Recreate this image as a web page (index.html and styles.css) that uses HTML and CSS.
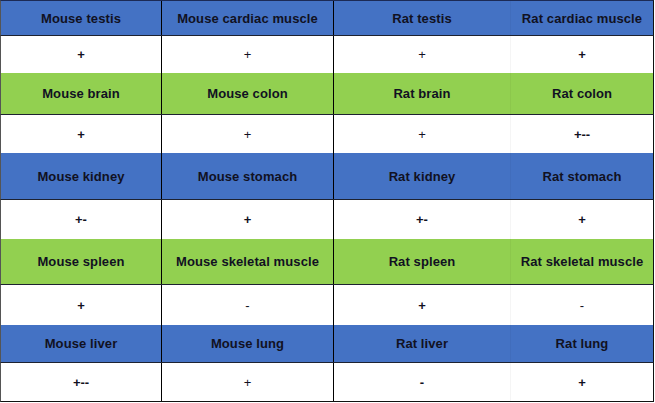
FILE: index.html
```html
<!DOCTYPE html>
<html>
<head>
<meta charset="utf-8">
<link rel="stylesheet" href="styles.css">
</head>
<body>
<div class="grid">
  <div class="row head blue h36 top">
    <div class="cell c1">Mouse testis</div>
    <div class="cell c2">Mouse cardiac muscle</div>
    <div class="cell c3">Rat testis</div>
    <div class="cell c4">Rat cardiac muscle</div>
  </div>
  <div class="row val h37">
    <div class="cell c1 b">+</div>
    <div class="cell c2">+</div>
    <div class="cell c3">+</div>
    <div class="cell c4 b">+</div>
  </div>
  <div class="row head green h42">
    <div class="cell c1">Mouse brain</div>
    <div class="cell c2">Mouse colon</div>
    <div class="cell c3">Rat brain</div>
    <div class="cell c4">Rat colon</div>
  </div>
  <div class="row val h38">
    <div class="cell c1 b">+</div>
    <div class="cell c2">+</div>
    <div class="cell c3">+</div>
    <div class="cell c4 b">+--</div>
  </div>
  <div class="row head blue h47">
    <div class="cell c1">Mouse kidney</div>
    <div class="cell c2">Mouse stomach</div>
    <div class="cell c3">Rat kidney</div>
    <div class="cell c4">Rat stomach</div>
  </div>
  <div class="row val h39">
    <div class="cell c1 b">+-</div>
    <div class="cell c2 b">+</div>
    <div class="cell c3 b">+-</div>
    <div class="cell c4 b">+</div>
  </div>
  <div class="row head green h46">
    <div class="cell c1">Mouse spleen</div>
    <div class="cell c2">Mouse skeletal muscle</div>
    <div class="cell c3">Rat spleen</div>
    <div class="cell c4">Rat skeletal muscle</div>
  </div>
  <div class="row val h40">
    <div class="cell c1 b">+</div>
    <div class="cell c2">-</div>
    <div class="cell c3 b">+</div>
    <div class="cell c4">-</div>
  </div>
  <div class="row head blue h38">
    <div class="cell c1">Mouse liver</div>
    <div class="cell c2">Mouse lung</div>
    <div class="cell c3">Rat liver</div>
    <div class="cell c4">Rat lung</div>
  </div>
  <div class="row val h39 last">
    <div class="cell c1 b">+--</div>
    <div class="cell c2">+</div>
    <div class="cell c3 b">-</div>
    <div class="cell c4 b">+</div>
  </div>
</div>
</body>
</html>
```
FILE: styles.css
```css
html, body {
  margin: 0;
  padding: 0;
  background: #ffffff;
}
.grid {
  width: 654px;
  display: flex;
  flex-direction: column;
  font-family: "Liberation Sans", Arial, sans-serif;
  color: #111122;
}
.row {
  display: flex;
  box-sizing: border-box;
  border-left: 1px solid #555;
  border-right: 1px solid #111;
}
.top { border-top: 1px solid #1c2a55; }
.head { border-bottom: 1px solid #1d2230; }
.last { border-bottom: 1px solid #111; }
.blue { background: #4472c4; }
.green { background: #92d050; }
.val { background: #ffffff; }
.h36 { height: 36px; }
.h37 { height: 37px; }
.h38 { height: 38px; }
.h39 { height: 39px; }
.h40 { height: 40px; }
.h42 { height: 42px; }
.h46 { height: 46px; }
.h47 { height: 47px; }
.cell {
  box-sizing: border-box;
  display: flex;
  align-items: center;
  justify-content: center;
  font-size: 13px;
  white-space: nowrap;
}
.head .cell { font-weight: bold; letter-spacing: 0.1px; }
.val .cell { font-size: 13px; font-weight: normal; }
.val .cell.b { font-weight: bold; }
.c1 { width: 161px; border-right: 1px solid #000; }
.c2 { width: 172px; border-right: 1px solid #000; }
.c3 { width: 177px; border-right: 1px solid rgba(0,0,0,0.04); }
.c4 { flex: 1; }
```
